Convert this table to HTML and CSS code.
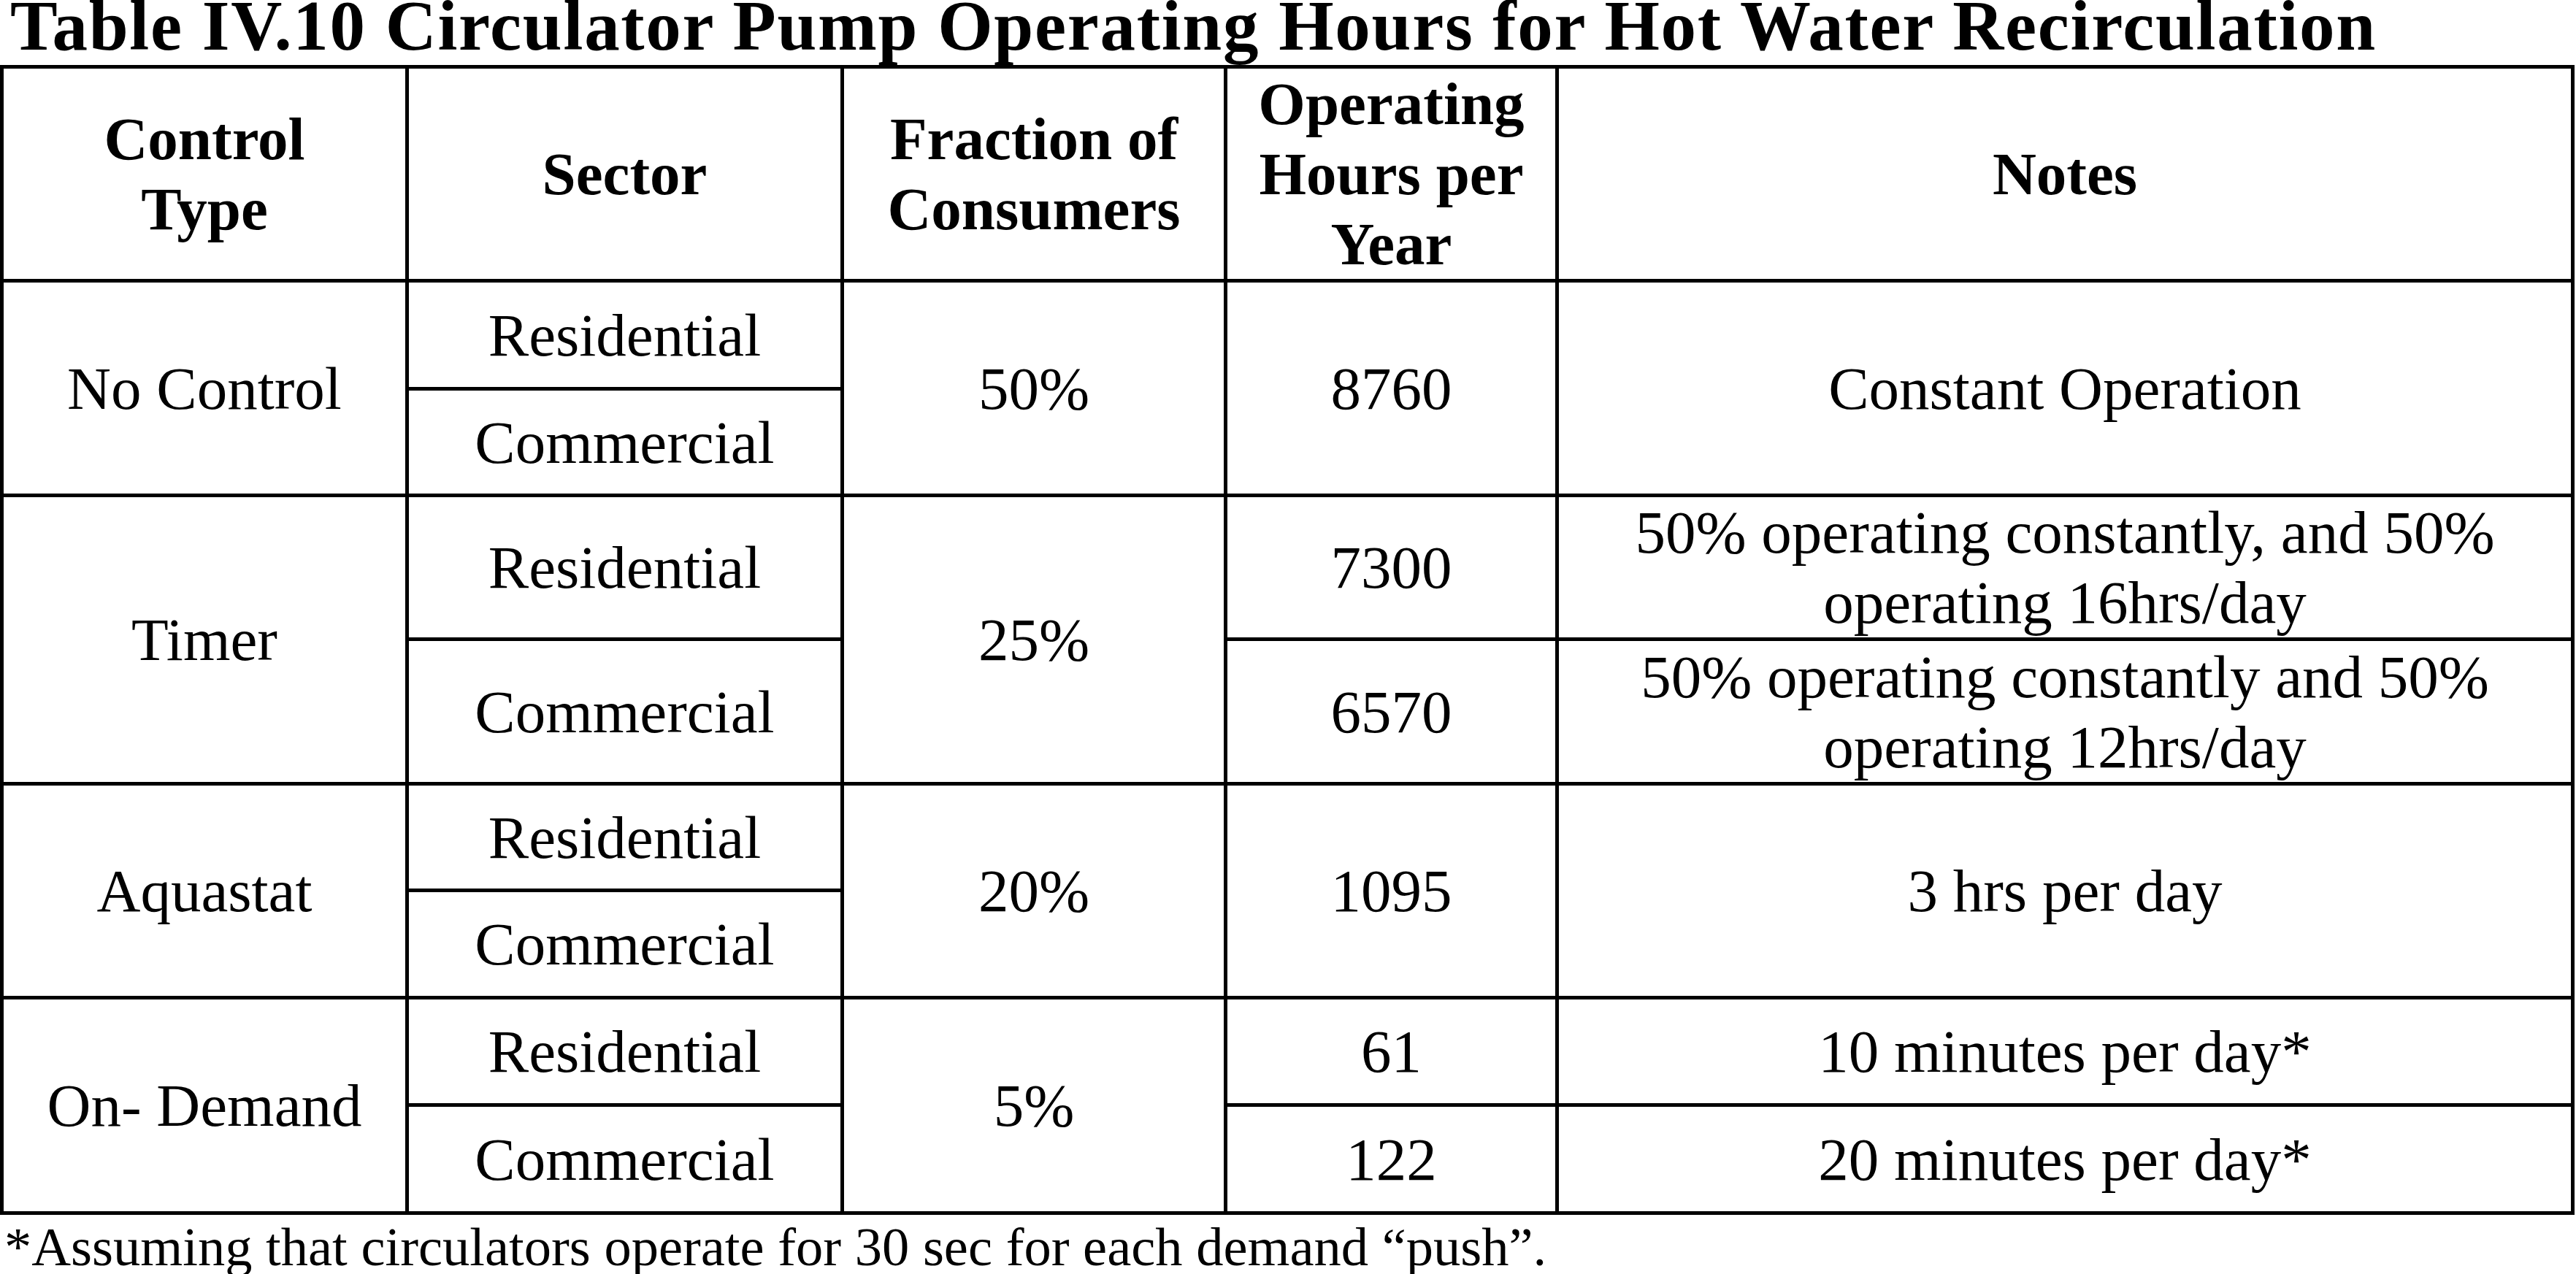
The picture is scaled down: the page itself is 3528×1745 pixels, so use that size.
FILE: index.html
```html
<!DOCTYPE html>
<html lang="en">
<head>
<meta charset="utf-8">
<title>Table IV.10 Circulator Pump Operating Hours for Hot Water Recirculation</title>
<link rel="stylesheet" href="styles.css">
</head>
<body>
<div class="page">
  <h1 class="caption">Table IV.10 Circulator Pump Operating Hours for Hot Water Recirculation</h1>
  <table class="data">
    <colgroup>
      <col class="c-type">
      <col class="c-sector">
      <col class="c-frac">
      <col class="c-hours">
      <col class="c-notes">
    </colgroup>
    <thead>
      <tr class="r-head">
        <th>Control<br>Type</th>
        <th>Sector</th>
        <th>Fraction of<br>Consumers</th>
        <th>Operating<br>Hours per<br>Year</th>
        <th>Notes</th>
      </tr>
    </thead>
    <tbody>
      <tr class="r-148">
        <td rowspan="2">No Control</td>
        <td>Residential</td>
        <td rowspan="2">50%</td>
        <td rowspan="2">8760</td>
        <td rowspan="2">Constant Operation</td>
      </tr>
      <tr class="r-146">
        <td>Commercial</td>
      </tr>
      <tr class="r-196">
        <td rowspan="2">Timer</td>
        <td>Residential</td>
        <td rowspan="2">25%</td>
        <td>7300</td>
        <td>50% operating constantly, and 50% operating 16hrs/day</td>
      </tr>
      <tr class="r-198">
        <td>Commercial</td>
        <td>6570</td>
        <td>50% operating constantly and 50% operating 12hrs/day</td>
      </tr>
      <tr class="r-146">
        <td rowspan="2">Aquastat</td>
        <td>Residential</td>
        <td rowspan="2">20%</td>
        <td rowspan="2">1095</td>
        <td rowspan="2">3 hrs per day</td>
      </tr>
      <tr class="r-147">
        <td>Commercial</td>
      </tr>
      <tr class="r-147">
        <td rowspan="2">On- Demand</td>
        <td>Residential</td>
        <td rowspan="2">5%</td>
        <td>61</td>
        <td>10 minutes per day*</td>
      </tr>
      <tr class="r-148">
        <td>Commercial</td>
        <td>122</td>
        <td>20 minutes per day*</td>
      </tr>
    </tbody>
  </table>
  <p class="footnote">*Assuming that circulators operate for 30 sec for each demand “push”.</p>
</div>
</body>
</html>
```

FILE: styles.css
```css
html, body {
  margin: 0;
  padding: 0;
  background: #ffffff;
}

body {
  font-family: "Liberation Serif", "Times New Roman", Times, serif;
  color: #000000;
  width: 3528px;
  height: 1745px;
  overflow: hidden;
}

.page {
  display: flex;
  flex-direction: column;
}

.caption {
  margin: 0 0 18px 0;
  padding-left: 14px;
  font-size: 97px;
  font-weight: bold;
  line-height: 71px;
  letter-spacing: 1.7px;
  white-space: nowrap;
}

.data {
  border-collapse: collapse;
  table-layout: fixed;
  width: 3526px;
  font-size: 83px;
  line-height: 96px;
}

.c-type { width: 555px; }
.c-sector { width: 596px; }
.c-frac { width: 525px; }
.c-hours { width: 454px; }
.c-notes { width: 1391px; }

.data th,
.data td {
  border: 5px solid #000000;
  padding: 0 20px;
  text-align: center;
  vertical-align: middle;
}

.data th {
  font-weight: bold;
}

.r-head { height: 290px; }
.r-146 { height: 146px; }
.r-147 { height: 147px; }
.r-148 { height: 148px; }
.r-196 { height: 196px; }
.r-198 { height: 198px; }

.footnote {
  margin: 6px 0 0 0;
  padding-left: 6px;
  font-size: 74.5px;
  line-height: 76px;
  white-space: nowrap;
}
```
